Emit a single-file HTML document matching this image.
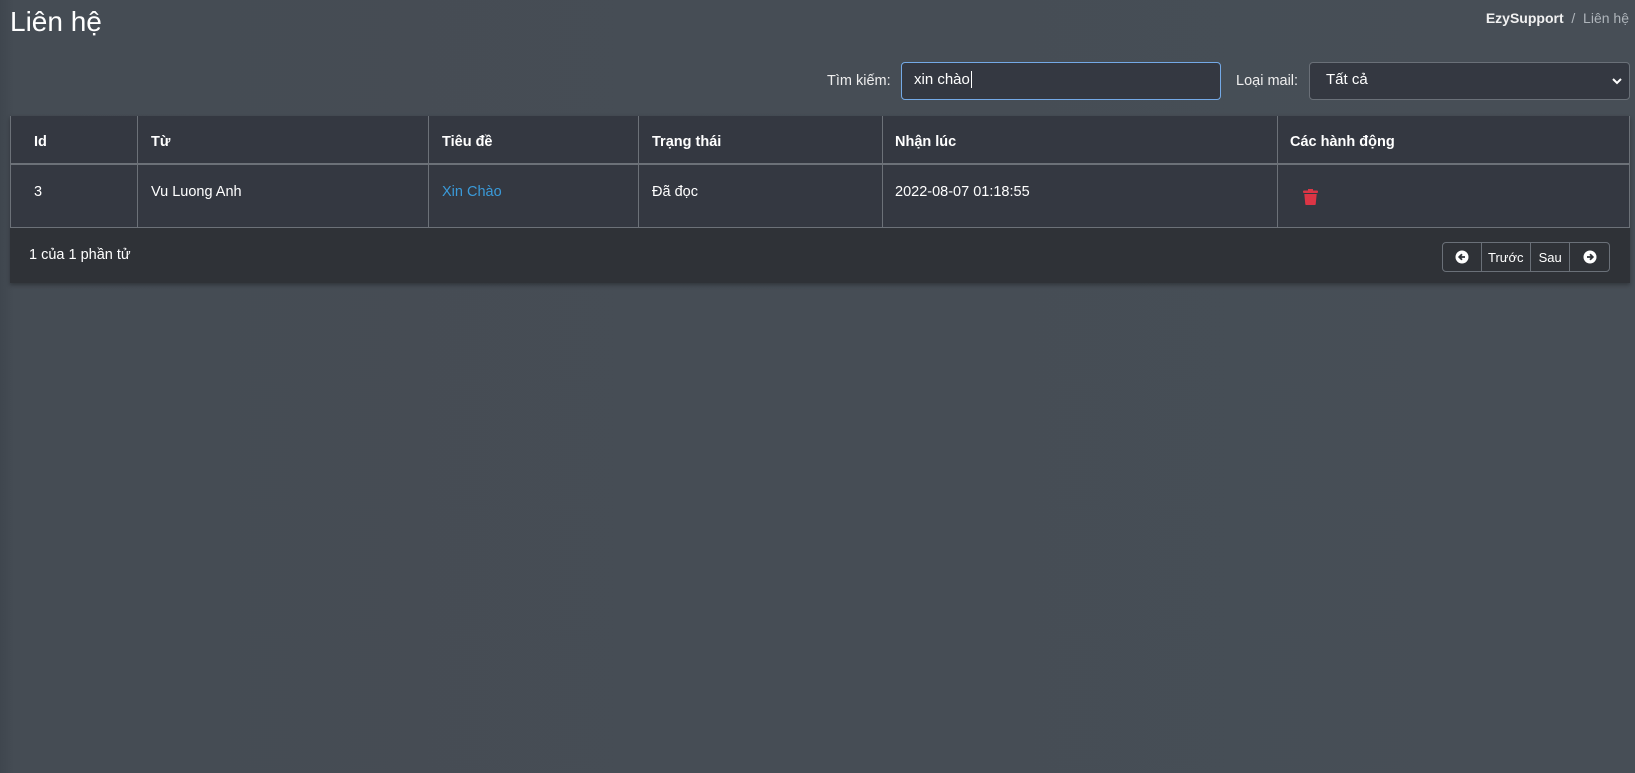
<!DOCTYPE html>
<html><head><meta charset="utf-8"><style>
*{box-sizing:border-box;margin:0;padding:0}
body{width:1635px;height:773px;overflow:hidden;background:linear-gradient(90deg,#3f464e 0,#454c54 14px,#474e56 100%);font-family:"Liberation Sans","DejaVu Sans",sans-serif;color:#fff;position:relative;font-size:14px}
.abs{position:absolute}
h1{position:absolute;left:10px;top:6px;font-size:28px;font-weight:400;color:#fff}
.bc{right:6px;top:10px;font-size:14px;color:#aeb4ba}
.bc b{color:#f1f1f1}
.lbl{font-size:14.5px;color:#eee}
.inp{left:901px;top:62px;width:320px;height:38px;border:1px solid #74a9e6;border-radius:4px;background:#343841;padding:8px 12px;font-size:15px}
.sel{left:1309px;top:62px;width:321px;height:38px;border:1px solid #6a7078;border-radius:4px;background:#343841;padding:8px 16px;font-size:15px}
.tbl{left:10px;top:116px;width:1620px;height:167px;background:#2f3237;box-shadow:0 2px 4px rgba(0,0,0,.3)}
.hd{left:0;top:0;width:1620px;height:49px;background:#343841;border-bottom:2px solid #6c7178}
.row{left:0;top:49px;width:1620px;height:63px;background:#343841;border-bottom:1px solid #6c7178}
.vl{width:1px;background:#6c7178;top:0;height:112px}
.th{font-weight:700;font-size:14.5px;top:18px}
.td{font-size:14.5px;top:68px}
.pg{left:1432px;top:126px;width:168px;height:30px;border:1px solid #6a7078;border-radius:4px;display:flex}
.pg div{border-right:1px solid #6a7078;display:flex;align-items:center;justify-content:center;font-size:13px}
.pg div:last-child{border-right:none}
</style></head><body>
<h1>Liên hệ</h1>
<div class="abs bc"><b>EzySupport</b>&nbsp; / &nbsp;Liên hệ</div>
<div class="abs lbl" style="left:827px;top:73px">Tìm kiếm:</div>
<div class="abs inp">xin chào<span style="border-left:1px solid #fff;margin-left:1px"></span></div>
<div class="abs lbl" style="left:1236px;top:73px">Loại mail:</div>
<div class="abs sel">Tất cả<svg style="position:absolute;right:6px;top:14px" width="12" height="9" viewBox="0 0 12 9"><path d="M2 2l4 4 4-4" stroke="#fff" stroke-width="2" fill="none"/></svg></div>
<div class="abs tbl">
<div class="abs hd"></div>
<div class="abs row"></div>
<div class="abs vl" style="left:0"></div>
<div class="abs vl" style="left:127px"></div>
<div class="abs vl" style="left:418px"></div>
<div class="abs vl" style="left:628px"></div>
<div class="abs vl" style="left:872px"></div>
<div class="abs vl" style="left:1267px"></div>
<div class="abs vl" style="left:1619px"></div>
<div class="abs th" style="left:24px">Id</div>
<div class="abs th" style="left:141px">Từ</div>
<div class="abs th" style="left:432px">Tiêu đề</div>
<div class="abs th" style="left:642px">Trạng thái</div>
<div class="abs th" style="left:885px">Nhận lúc</div>
<div class="abs th" style="left:1280px">Các hành động</div>
<div class="abs td" style="left:24px">3</div>
<div class="abs td" style="left:141px">Vu Luong Anh</div>
<div class="abs td" style="left:432px;color:#3a9ad9">Xin Chào</div>
<div class="abs td" style="left:642px">Đã đọc</div>
<div class="abs td" style="left:885px">2022-08-07 01:18:55</div>
<svg class="abs" style="left:1293px;top:73px" width="15" height="16" viewBox="0 0 15 16"><rect x="0" y="1.5" width="15" height="2.5" rx="1" fill="#dc3545"/><rect x="5" y="0" width="5" height="2" fill="#dc3545"/><path d="M1.3 5h12.4l-1 10.2a1 1 0 0 1-1 .8H3.3a1 1 0 0 1-1-.8z" fill="#dc3545"/></svg>
<div class="abs" style="left:19px;top:131px;font-size:14.5px">1 của 1 phần tử</div>
<div class="abs pg">
<div style="width:39px"><svg width="14" height="14" viewBox="0 0 14 14"><circle cx="7" cy="7" r="6.5" fill="#fff"/><path d="M10 7H4.5M7 4.2L4.2 7 7 9.8" stroke="#2f3237" stroke-width="1.8" fill="none"/></svg></div>
<div style="width:50px">Trước</div>
<div style="width:40px">Sau</div>
<div style="width:39px"><svg width="14" height="14" viewBox="0 0 14 14"><circle cx="7" cy="7" r="6.5" fill="#fff"/><path d="M4 7h5.5M7 4.2L9.8 7 7 9.8" stroke="#2f3237" stroke-width="1.8" fill="none"/></svg></div>
</div>
</div>
</body></html>
